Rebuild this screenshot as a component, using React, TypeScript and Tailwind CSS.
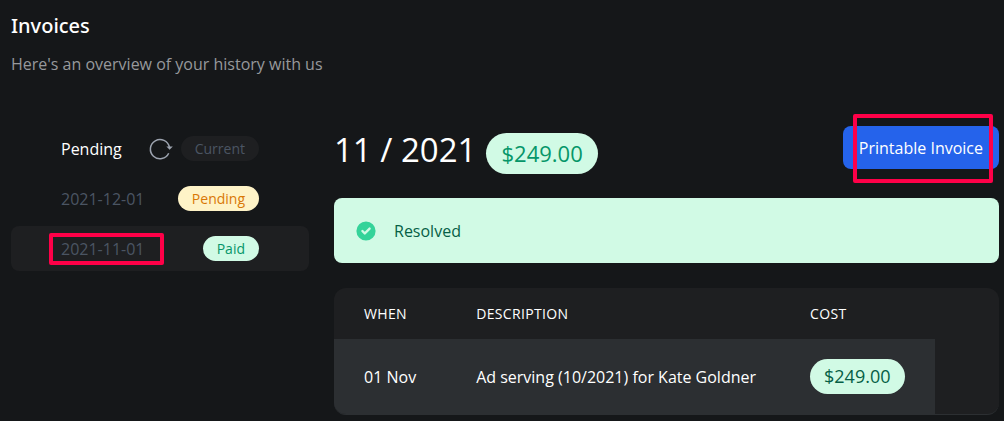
import clsx from "clsx";

const invoices = [
  { label: "Pending", status: "Current", current: true, badge: "bg-[#1e1f21] text-[#4b5563]" },
  { label: "2021-12-01", status: "Pending", badge: "bg-[#fef3c7] text-[#d97706]" },
  { label: "2021-11-01", status: "Paid", selected: true, badge: "bg-[#d1fae5] text-[#059669]" },
];

function RefreshIcon() {
  return (
    <svg width="24" height="24" viewBox="0 0 24 24" fill="none" stroke="#9ca3af" strokeWidth="1.5">
      <path d="M20.4 10.2A9.6 9.6 0 1 0 19.7 16.2" />
      <path d="M17.4 9.6L23.8 9.6L20.6 12.8Z" fill="#9ca3af" stroke="none" />
    </svg>
  );
}

function CheckIcon() {
  return (
    <svg width="24" height="24" viewBox="0 0 20 20" fill="#34d399">
      <path fillRule="evenodd" clipRule="evenodd" d="M10 18a8 8 0 100-16 8 8 0 000 16zm3.707-9.293a1 1 0 00-1.414-1.414L9 10.586 7.707 9.293a1 1 0 00-1.414 1.414l2 2a1 1 0 001.414 0l4-4z" />
    </svg>
  );
}

export default function App() {
  return (
    <div className="min-h-screen bg-[#151719] pt-3 pr-[5px] pb-1.5 pl-[11px] font-['Open_Sans','Noto_Sans',sans-serif] text-base text-white">
      <header>
        <h1 className="font-['Noto_Sans',sans-serif] text-xl leading-7 font-medium">Invoices</h1>
        <p className="mt-3 leading-6 text-[#97999c]">Here's an overview of your history with us</p>
      </header>

      <div className="mt-[50px] flex gap-[25px]">
        <nav className="flex w-[298px] shrink-0 flex-col gap-[5px]">
          {invoices.map((invoice) => (
            <a
              key={invoice.label}
              href="#"
              className={clsx(
                "flex h-[45px] items-center rounded-lg px-[50px]",
                invoice.selected && "bg-[#1e1f21]"
              )}
            >
              <span className={clsx("relative", invoice.current ? "text-white" : "text-[#4b5563]")}>
                {invoice.label}
                {invoice.selected && (
                  <span className="absolute -top-1 -right-5 -bottom-1 -left-3 rounded-xs border-4 border-[#ff0048]" />
                )}
              </span>
              <span className="ml-auto flex items-center gap-2">
                {invoice.current && <RefreshIcon />}
                <span className={clsx("rounded-full px-3.5 text-sm leading-[25px]", invoice.badge)}>
                  {invoice.status}
                </span>
              </span>
            </a>
          ))}
        </nav>

        <main className="min-w-0 flex-1">
          <div className="flex items-start justify-between">
            <h2 className="flex gap-2.5 text-[33px] leading-12">
              11 / 2021
              <span className="mt-[7px] rounded-full bg-[#d1fae5] px-[15px] text-[22px] leading-10 text-[#059669]">$249.00</span>
            </h2>
            <button className="relative h-[43px] rounded-lg bg-[#2563eb] px-4">
              Printable Invoice
              <span className="absolute -top-3 right-1.5 -bottom-3.5 left-2.5 rounded-xs border-4 border-[#ff0048]" />
            </button>
          </div>

          <div className="mt-6 flex h-[65px] items-center gap-4 rounded-lg bg-[#d1fae5] px-5 text-[#065f46]">
            <CheckIcon />
            Resolved
          </div>

          <div className="mt-[25px] overflow-hidden rounded-xl border-b border-[#2c2f32] bg-[#1e1f21]">
            <table className="text-left">
              <thead>
                <tr className="h-[51px] text-sm tracking-wide">
                  <th className="pl-[30px] font-medium">WHEN</th>
                  <th className="pl-[30px] font-medium">DESCRIPTION</th>
                  <th className="pl-6 font-medium">COST</th>
                </tr>
              </thead>
              <tbody>
                <tr className="h-[75px] bg-[#2c2f32]">
                  <td className="px-[30px]">01 Nov</td>
                  <td className="px-[30px]">Ad serving (10/2021) for Kate Goldner</td>
                  <td className="pr-[30px] pl-6">
                    <span className="inline-block rounded-full bg-[#d1fae5] px-3.5 text-lg leading-[35px] text-[#065f46]">$249.00</span>
                  </td>
                </tr>
              </tbody>
            </table>
          </div>
        </main>
      </div>
    </div>
  );
}
